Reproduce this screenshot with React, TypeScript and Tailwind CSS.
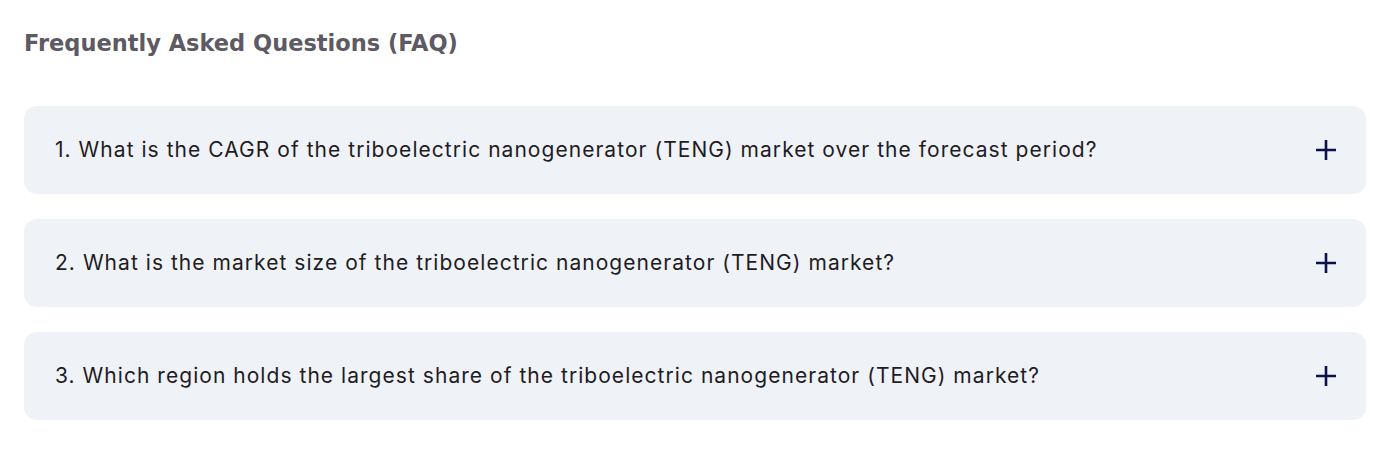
import React from "react";

const questions = [
  "1. What is the CAGR of the triboelectric nanogenerator (TENG) market over the forecast period?",
  "2. What is the market size of the triboelectric nanogenerator (TENG) market?",
  "3. Which region holds the largest share of the triboelectric nanogenerator (TENG) market?",
];

function Plus() {
  return (
    <svg width="22" height="22" viewBox="0 0 22 22" className="shrink-0">
      <path d="M11 1v20M1 11h20" stroke="#0b1150" strokeWidth="2.6" />
    </svg>
  );
}

export default function App() {
  return (
    <div className="w-[1389px] h-[460px] bg-white px-6 pt-[28px]">
      <h2
        className="text-[22.5px] font-bold text-[#5d5a63] leading-[30px]"
        style={{ fontFamily: '"DejaVu Sans", sans-serif' }}
      >
        Frequently Asked Questions (FAQ)
      </h2>
      <div className="mt-[48px] flex flex-col gap-[25px] w-[1342px]">
        {questions.map((q) => (
          <div
            key={q}
            className="h-[88px] rounded-[13px] bg-[#eff2f7] flex items-center justify-between pl-[31px] pr-[29px]"
          >
            <span
              className="text-[21px] tracking-[1.04px] text-[#1f1c24]"
              style={{ fontFamily: 'Inter, sans-serif' }}
            >
              {q}
            </span>
            <Plus />
          </div>
        ))}
      </div>
    </div>
  );
}
